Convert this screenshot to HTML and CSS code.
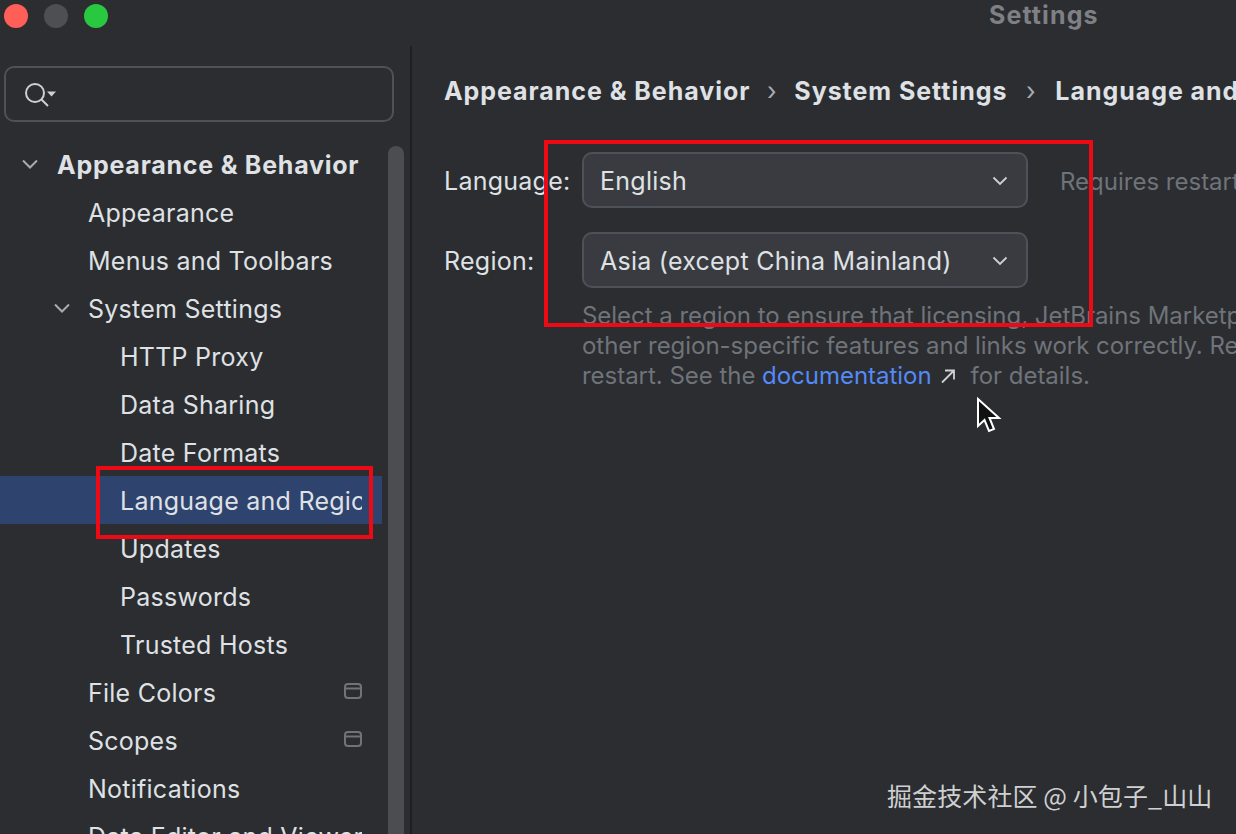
FILE: index.html
```html
<!DOCTYPE html>
<html lang="en">
<head>
<meta charset="utf-8">
<title>Settings</title>
<link rel="stylesheet" href="styles.css">
</head>
<body>
<div class="window">
  <aside class="sidebar">
    <div class="lights">
      <span class="light red"></span>
      <span class="light grey"></span>
      <span class="light green"></span>
    </div>
    <div class="search">
      <svg class="search-icon" width="34" height="26" viewBox="0 0 34 26" fill="none">
        <circle cx="11" cy="11" r="9" stroke="#ced0d6" stroke-width="2"/>
        <path d="M17.5 17.5L24 24" stroke="#ced0d6" stroke-width="2"/>
        <path d="M23 9.5h9l-4.5 5z" fill="#ced0d6"/>
      </svg>
    </div>
    <div class="tree-wrap">
      <nav class="tree">
        <div class="row level0 bold"><svg class="chev" width="18" height="12" viewBox="0 0 18 12" fill="none"><path d="M2 2.5l7 7 7-7" stroke="#a8abb2" stroke-width="2"/></svg><span class="label">Appearance &amp; Behavior</span></div>
        <div class="row level1"><span class="label">Appearance</span></div>
        <div class="row level1"><span class="label">Menus and Toolbars</span></div>
        <div class="row level1b"><svg class="chev" width="18" height="12" viewBox="0 0 18 12" fill="none"><path d="M2 2.5l7 7 7-7" stroke="#a8abb2" stroke-width="2"/></svg><span class="label">System Settings</span></div>
        <div class="row level2"><span class="label">HTTP Proxy</span></div>
        <div class="row level2"><span class="label">Data Sharing</span></div>
        <div class="row level2"><span class="label">Date Formats</span></div>
        <div class="row level2 selected"><span class="label">Language and Region</span></div>
        <div class="row level2"><span class="label">Updates</span></div>
        <div class="row level2"><span class="label">Passwords</span></div>
        <div class="row level2"><span class="label">Trusted Hosts</span></div>
        <div class="row level1"><span class="label">File Colors</span><svg class="tag" width="18" height="16" viewBox="0 0 18 16" fill="none"><rect x="1" y="1" width="16" height="14" rx="3" stroke="#6f737a" stroke-width="2"/><path d="M1 5.500h16" stroke="#6f737a" stroke-width="2"/></svg></div>
        <div class="row level1"><span class="label">Scopes</span><svg class="tag" width="18" height="16" viewBox="0 0 18 16" fill="none"><rect x="1" y="1" width="16" height="14" rx="3" stroke="#6f737a" stroke-width="2"/><path d="M1 5.500h16" stroke="#6f737a" stroke-width="2"/></svg></div>
        <div class="row level1"><span class="label">Notifications</span></div>
        <div class="row level1"><span class="label">Data Editor and Viewer</span></div>
      </nav>
      <div class="scrollbar"></div>
    </div>
  </aside>
  <div class="divider"></div>
  <main class="content">
    <div class="titlebar">Settings</div>
    <div class="crumbs">
      <span>Appearance &amp; Behavior</span><span class="sep sep-first">›</span>
      <span>System Settings</span><span class="sep sep-second">›</span>
      <span>Language and Region</span>
    </div>
    <div class="form">
      <div class="field">
        <span class="field-label">Language:</span>
        <div class="combo"><span>English</span><svg width="16" height="10" viewBox="0 0 16 10" fill="none"><path d="M1.500 1.500L8 8l6.500-6.500" stroke="#ced0d6" stroke-width="1.800"/></svg></div>
        <span class="hint">Requires restart</span>
      </div>
      <div class="field">
        <span class="field-label">Region:</span>
        <div class="combo"><span>Asia (except China Mainland)</span><svg width="16" height="10" viewBox="0 0 16 10" fill="none"><path d="M1.500 1.500L8 8l6.500-6.500" stroke="#ced0d6" stroke-width="1.800"/></svg></div>
      </div>
      <div class="help">
        <div>Select a region to ensure that licensing, JetBrains Marketplace,</div>
        <div>other region-specific features and links work correctly. Requires</div>
        <div>restart. See the <a class="link">documentation</a><svg class="ext" width="16" height="16" viewBox="0 0 16 16" fill="none"><path d="M2 14.500L14 2.500M5 2.500h9v9" stroke="#ced0d6" stroke-width="1.800"/></svg><span class="after">for details.</span></div>
      </div>
    </div>
  </main>
</div>
<div class="mark mark-form"></div>
<div class="mark mark-item"></div>
<svg class="cursor" width="26" height="36" viewBox="0 0 26 36"><path d="M2 2v27l6.500-6 4.500 11 5-2-4.500-11H23z" fill="#111" stroke="#fff" stroke-width="2"/></svg>
<div class="watermark">掘金技术社区 @ 小包子_山山</div>
</body>
</html>
```
FILE: styles.css
```css
html, body {
  margin: 0;
  height: 834px;
  overflow: hidden;
  background: #2b2d30;
}
body {
  position: relative;
  font-family: Inter, "Noto Sans CJK SC", sans-serif;
  color: #dfe1e5;
  font-size: 25px;
  letter-spacing: 0.25px;
}
.window {
  display: flex;
  height: 834px;
  overflow: hidden;
}
.sidebar {
  width: 410px;
  flex: none;
  display: flex;
  flex-direction: column;
}
.divider {
  width: 2px;
  flex: none;
  margin-top: 46px;
  background: #1e1f22;
}
.lights {
  display: flex;
  gap: 16px;
  padding: 4px 0 0 4px;
  height: 66px;
  box-sizing: border-box;
  flex: none;
}
.light {
  width: 24px;
  height: 24px;
  border-radius: 50%;
}
.light.red { background: #ff5f57; }
.light.grey { background: #4e4f52; }
.light.green { background: #28c840; }
.search {
  margin-left: 4px;
  width: 390px;
  height: 56px;
  flex: none;
  box-sizing: border-box;
  border: 2px solid #4e5157;
  border-radius: 10px;
  display: flex;
  align-items: center;
  padding-left: 18px;
}
.search-icon { margin-top: 2px; }
.tree-wrap {
  margin-top: 18px;
  display: flex;
  flex: 1;
  min-height: 0;
}
.tree {
  width: 382px;
  flex: none;
}
.row {
  height: 48px;
  display: flex;
  align-items: center;
  white-space: nowrap;
  box-sizing: border-box;
  padding-right: 20px;
}
.label {
  flex: 0 1 auto;
  min-width: 0;
  overflow: hidden;
  padding-top: 2px;
}
.bold { font-weight: 700; letter-spacing: 0.76px; }
.level0 { padding-left: 21px; }
.level0 .chev { margin-right: 18px; flex: none; }
.level1 { padding-left: 88px; }
.level1b { padding-left: 53px; }
.level1b .chev { margin-right: 17px; flex: none; }
.level2 { padding-left: 120px; }
.selected { background: #2e436e; }
.tag {
  margin-left: auto;
  flex: none;
  position: relative;
  top: -1px;
}
.scrollbar {
  width: 16px;
  margin-left: 6px;
  margin-top: 6px;
  background: #4b4d50;
  border-radius: 8px 8px 0 0;
  flex: none;
}
.content {
  flex: 1;
  min-width: 0;
  overflow: hidden;
  white-space: nowrap;
}
.titlebar {
  height: 30px;
  line-height: 30px;
  padding-left: 577px;
  font-weight: 700;
  letter-spacing: 1.1px;
  color: #7e8085;
}
.crumbs {
  margin-top: 44px;
  padding-left: 32px;
  height: 34px;
  line-height: 34px;
  font-weight: 700;
  letter-spacing: 0.95px;
  display: flex;
}
.crumbs > span { flex: none; }
.crumbs > .sep {
  text-align: center;
  font-weight: 400;
  color: #a8abb2;
}
.crumbs > .sep-first { width: 44px; }
.crumbs > .sep-second { width: 48px; }
.form {
  margin-top: 44px;
  padding-left: 32px;
}
.field {
  display: flex;
  align-items: center;
  height: 56px;
  margin-bottom: 24px;
}
.field-label { width: 138px; flex: none; padding-top: 2px; }
.combo {
  width: 446px;
  height: 56px;
  box-sizing: border-box;
  flex: none;
  background: #393b40;
  border: 2px solid #4e5157;
  border-radius: 10px;
  display: flex;
  align-items: center;
  justify-content: space-between;
  padding: 2px 18px 0 16px;
}
.hint {
  margin-left: 32px;
  padding-top: 2px;
  color: #6f737a;
  font-size: 24px;
  letter-spacing: 0;
}
.help {
  margin-top: -11px;
  padding-left: 138px;
  color: #6f737a;
  font-size: 24px;
  line-height: 30px;
  letter-spacing: -0.03px;
}
.link { color: #548af7; }
.ext { margin-left: 8px; }
.after { margin-left: 15px; }
.mark {
  position: absolute;
  box-sizing: border-box;
  border: 4px solid #ee0a14;
}
.mark-form { left: 544px; top: 140px; width: 549px; height: 187px; }
.mark-item { left: 96px; top: 466px; width: 277px; height: 73px; }
.cursor { position: absolute; left: 976px; top: 397px; }
.watermark {
  position: absolute;
  left: 887px;
  top: 779px;
  font-size: 25px;
  letter-spacing: 0.1px;
  line-height: 32px;
  color: #cfd0d2;
  font-family: "Noto Sans CJK SC", sans-serif;
  white-space: nowrap;
}
```
